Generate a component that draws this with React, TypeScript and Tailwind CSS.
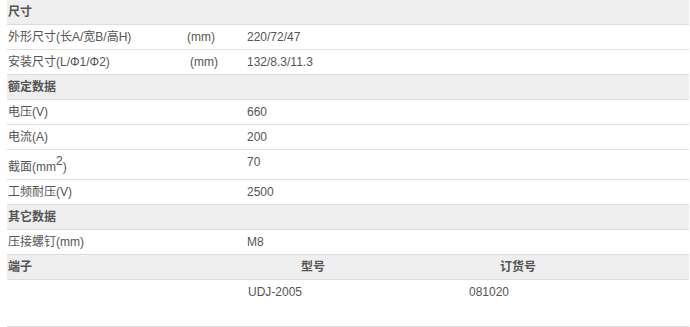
import type { ReactNode } from "react";

const font = { fontFamily: '"Liberation Sans", Arial, "Noto Sans CJK SC", sans-serif' };

function Section({ title }: { title: string }) {
  return (
    <div className="flex h-[25px] items-center border-b border-[#dddddd] bg-[#efefef] pl-[1px] text-[12px] font-bold text-[#555555]">
      {title}
    </div>
  );
}

function Row({
  label,
  unit,
  unitPad = "pl-0",
  value,
  tall = false,
}: {
  label: ReactNode;
  unit?: string;
  unitPad?: string;
  value: string;
  tall?: boolean;
}) {
  return (
    <div
      className={
        "flex items-start border-b border-[#dddddd] pl-[1px] text-[12px] leading-[24px] text-[#555555] " +
        (tall ? "h-[30px]" : "h-[25px]")
      }
    >
      <div className={"w-[179px] " + (tall ? "pt-[5px]" : "")}>{label}</div>
      <div className={"w-[60px] " + unitPad}>{unit}</div>
      <div>{value}</div>
    </div>
  );
}

export default function App() {
  return (
    <div className="h-[327px] w-[690px] overflow-hidden bg-white" style={font}>
      <div className="ml-[7px] mr-[1px]">
        <div className="flex h-[25px] items-center border-b border-[#dddddd] bg-[#efefef] pl-[1px] pb-[1px] text-[12px] font-bold text-[#555555]">
          尺寸
        </div>
        <Row label="外形尺寸(长A/宽B/高H)" unit="(mm)" value="220/72/47" />
        <Row label="安装尺寸(L/Φ1/Φ2)" unit="(mm)" unitPad="pl-[3px]" value="132/8.3/11.3" />
        <Section title="额定数据" />
        <Row label="电压(V)" value="660" />
        <Row label="电流(A)" value="200" />
        <Row
          tall
          label={
            <span>
              截面(mm<sup className="relative -top-[6px] align-baseline text-[12px] leading-none">2</sup>)
            </span>
          }
          value="70"
        />
        <Row label="工频耐压(V)" value="2500" />
        <Section title="其它数据" />
        <Row label="压接螺钉(mm)" value="M8" />
        <div className="flex h-[25px] items-center border-b border-[#dddddd] bg-[#efefef] pl-[1px] text-[12px] font-bold text-[#555555]">
          <div className="w-[240px]">端子</div>
          <div className="w-[221px] pl-[53px]">型号</div>
          <div className="pl-[31px]">订货号</div>
        </div>
        <div className="flex h-[47px] items-start border-b border-[#dddddd] pl-[1px] text-[12px] leading-[24px] text-[#555555]">
          <div className="w-[240px]" />
          <div className="w-[221px]">UDJ-2005</div>
          <div>081020</div>
        </div>
      </div>
    </div>
  );
}
